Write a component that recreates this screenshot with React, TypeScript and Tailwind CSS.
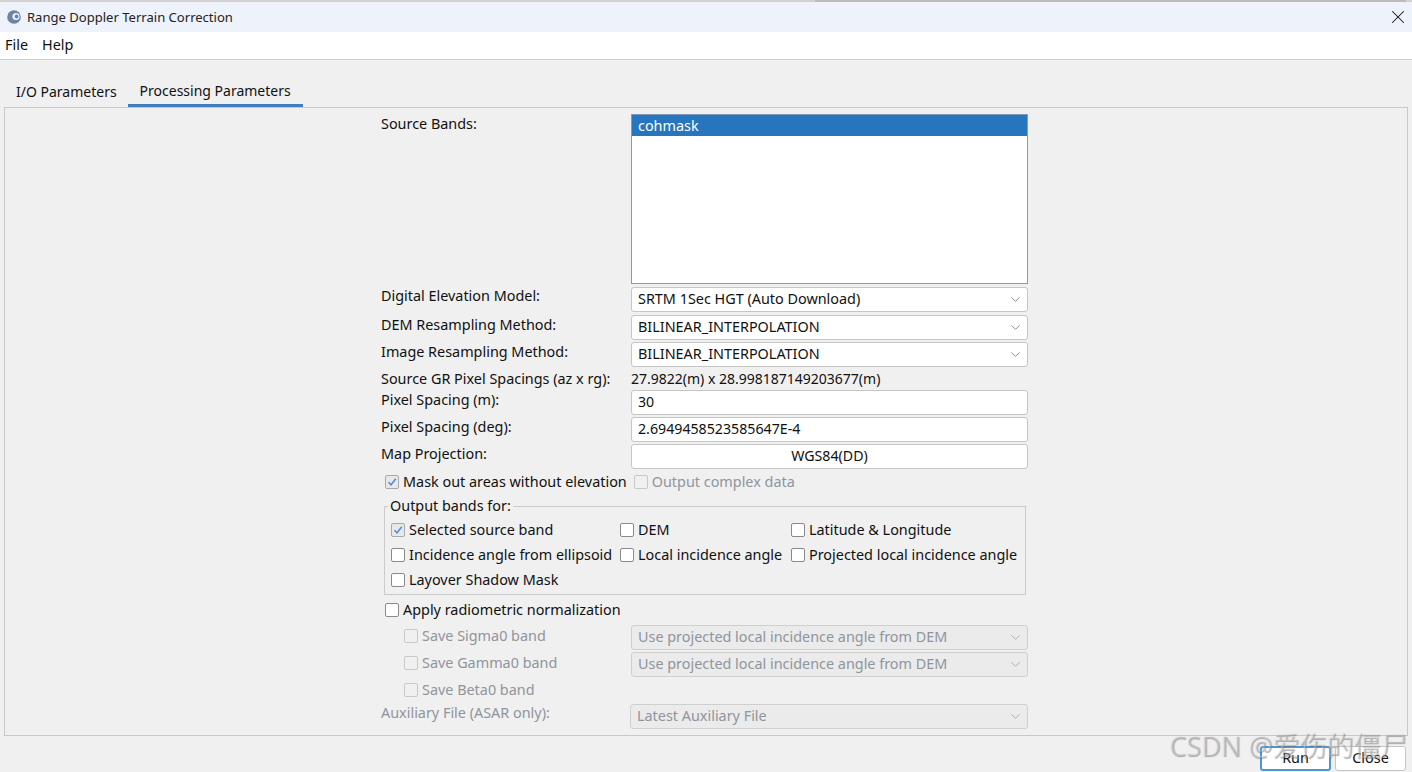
import React from "react";
import { ChevronDown, X } from "lucide-react";

const Check = ({ checked, muted }: { checked?: boolean; muted?: boolean }) => (
  <span
    className={`w-[14px] h-[14px] shrink-0 rounded-[2px] border flex items-center justify-center ${
      muted ? "border-[#c8c8c8] bg-[#f0f0f0]" : checked ? "border-[#a8a8a8] bg-[#e8e8e8]" : "border-[#8a8a8a] bg-white"
    }`}
  >
    {checked && (
      <svg width="12" height="12" viewBox="0 0 12 12" fill="none">
        <path d="M2.4 6.2 5 8.8 9.8 2.8" stroke="#4a8fd4" strokeWidth="1.5" />
      </svg>
    )}
  </span>
);

const Option = ({ label, checked, muted }: { label: string; checked?: boolean; muted?: boolean }) => (
  <div className={`flex items-center gap-[4px] ${muted ? "text-[#8f959c]" : "text-[#111]"}`}>
    <Check checked={checked} muted={muted} />
    <span className="whitespace-nowrap">{label}</span>
  </div>
);

const Select = ({ value, muted }: { value: string; muted?: boolean }) => (
  <div
    className={`w-[397px] h-[25px] rounded-[3px] border flex items-center justify-between pl-[6px] pr-[4px] ${
      muted ? "bg-[#ebebeb] border-[#cfcfcf] text-[#8f959c]" : "bg-white border-[#c6c6c6] text-[#111]"
    }`}
  >
    <span className="whitespace-nowrap pb-[2px]">{value}</span>
    <ChevronDown size={15} strokeWidth={1.2} className={muted ? "text-[#9a9a9a]" : "text-[#666]"} />
  </div>
);

const TextBox = ({ value, center }: { value: string; center?: boolean }) => (
  <div className={`w-[397px] h-[25px] rounded-[3px] border border-[#c6c6c6] bg-white flex items-center px-[6px] pb-[1px] text-[14.2px] text-[#111] ${center ? "justify-center" : ""}`}>
    {value}
  </div>
);

const Row = ({ label, children, className, flush }: { label: string; children: React.ReactNode; className?: string; flush?: boolean }) => (
  <div className={`flex ${className ?? ""}`}>
    <div className={`w-[250px] shrink-0 whitespace-nowrap leading-[20px] text-[#111] ${flush ? "" : "mt-[-1px]"}`}>{label}</div>
    {children}
  </div>
);

export default function App() {
  return (
    <div
      className="w-[1412px] h-[772px] overflow-hidden relative bg-[#f0f0f0] flex flex-col text-[14.4px] leading-[20px] text-[#111]"
      style={{ fontFamily: '"Noto Sans", "Noto Sans CJK SC", sans-serif' }}
    >
      {/* title bar */}
      <div className="h-[32px] shrink-0 bg-[#eef2fa] border-t-2 border-[#d2d2d2] flex items-center pl-[7px] pr-[3px] text-[13.05px] text-[#222] relative">
        <span className="absolute left-[815px] right-[6px] top-[-2px] h-[2px] bg-[#bcbcbc]" />
        <svg width="14" height="14" viewBox="0 0 14 14" className="mr-[6px]">
          <circle cx="7" cy="7" r="6.8" fill="#6b83a6" />
          <circle cx="9" cy="6.5" r="3.6" fill="#eef2fa" />
          <circle cx="9.6" cy="6.5" r="1.9" fill="#6b83a6" />
        </svg>
        <span>Range Doppler Terrain Correction</span>
        <X size={22} strokeWidth={1.1} className="ml-auto text-[#111]" />
      </div>

      {/* menu */}
      <div className="h-[28px] shrink-0 bg-white border-b border-[#cfcfcf] flex items-center gap-[14px] pl-[5px] pb-[1px]">
        <span>File</span>
        <span>Help</span>
      </div>

      {/* tabs */}
      <div className="h-[47px] shrink-0 flex items-end pl-[4px] pr-[4px] text-[14px]">
        <div className="h-[32px] pl-[12px] pr-[11px] pt-[2px] flex items-center">I/O Parameters</div>
        <div className="h-[32px] w-[175px] pt-[3px] flex items-center justify-center border-b-[3px] border-[#3f7fbf]">Processing Parameters</div>
      </div>

      {/* panel */}
      <div className="mx-[4px] h-[629px] shrink-0 border border-[#c8c8c8] flex justify-center pt-[6px]">
        <div className="w-[647px] ml-[-3px] flex flex-col">
          <Row label="Source Bands:" flush>
            <div className="w-[397px] h-[170px] border border-[#7f9db9] bg-white">
              <div className="h-[21px] bg-[#2675bf] text-white px-[6px] flex items-center">cohmask</div>
            </div>
          </Row>

          <Row label="Digital Elevation Model:" className="mt-[3px]">
            <Select value="SRTM 1Sec HGT (Auto Download)" />
          </Row>
          <Row label="DEM Resampling Method:" className="mt-[3px]" flush>
            <Select value="BILINEAR_INTERPOLATION" />
          </Row>
          <Row label="Image Resampling Method:" className="mt-[2px]" flush>
            <Select value="BILINEAR_INTERPOLATION" />
          </Row>
          <Row label="Source GR Pixel Spacings (az x rg):" className="mt-[2px]" flush>
            <div className="leading-[20px] text-[14px]">27.9822(m) x 28.998187149203677(m)</div>
          </Row>
          <Row label="Pixel Spacing (m):" className="mt-[1px]" flush>
            <TextBox value="30" />
          </Row>
          <Row label="Pixel Spacing (deg):" className="mt-[2px]" flush>
            <TextBox value="2.6949458523585647E-4" />
          </Row>
          <Row label="Map Projection:" className="mt-[2px]" flush>
            <TextBox value="WGS84(DD)" center />
          </Row>

          <div className="flex items-center gap-[7px] ml-[4px] mt-[3px] h-[20px]">
            <Option label="Mask out areas without elevation" checked />
            <Option label="Output complex data" muted />
          </div>

          {/* output bands */}
          <div className="relative ml-[3px] mr-[2px] mt-[14px] h-[89px] border border-[#cbcbcb] pl-[6px] pt-[10px]">
            <span className="absolute left-[3px] top-[-11px] bg-[#f0f0f0] px-[2px]">Output bands for:</span>
            <div className="grid grid-cols-[229px_171px_auto] grid-rows-[25px_25px_25px] items-center">
              <Option label="Selected source band" checked />
              <Option label="DEM" />
              <Option label="Latitude & Longitude" />
              <Option label="Incidence angle from ellipsoid" />
              <Option label="Local incidence angle" />
              <Option label="Projected local incidence angle" />
              <Option label="Layover Shadow Mask" />
            </div>
          </div>

          <div className="ml-[4px] mt-[5px]">
            <Option label="Apply radiometric normalization" />
          </div>

          <div className="flex flex-col mt-[5px]">
            <div className="h-[25px] flex items-center relative pl-[250px]">
              <div className="absolute left-[23px] top-[1px]"><Option label="Save Sigma0 band" muted /></div>
              <Select value="Use projected local incidence angle from DEM" muted />
            </div>
            <div className="h-[25px] flex items-center relative pl-[250px] mt-[2px]">
              <div className="absolute left-[23px] top-[1px]"><Option label="Save Gamma0 band" muted /></div>
              <Select value="Use projected local incidence angle from DEM" muted />
            </div>
            <div className="ml-[23px] mt-[3px]">
              <Option label="Save Beta0 band" muted />
            </div>
            <div className="flex mt-[3px]">
              <div className="w-[249px] text-[#8f959c] whitespace-nowrap">Auxiliary File (ASAR only):</div>
              <div className="mt-[1px] w-[398px]">
                <div className="h-[25px] rounded-[3px] border border-[#cfcfcf] bg-[#ebebeb] text-[#8f959c] flex items-center justify-between pl-[6px] pr-[4px]">
                  <span className="pb-[2px]">Latest Auxiliary File</span>
                  <ChevronDown size={15} strokeWidth={1.2} className="text-[#9a9a9a]" />
                </div>
              </div>
            </div>
          </div>
        </div>
      </div>

      {/* footer */}
      <div className="flex justify-end gap-[4px] pr-[6px] mt-[10px]">
        <div className="w-[71px] h-[25px] rounded-[3px] border-2 border-[#4a97dc] bg-white flex items-center justify-center pb-[1px]">Run</div>
        <div className="w-[71px] h-[25px] rounded-[3px] border border-[#c6c6c6] bg-white flex items-center justify-center pb-[1px]">Close</div>
      </div>

      {/* watermark */}
      <div className="absolute left-[1169px] top-[729px] text-[27px] leading-[34px] whitespace-nowrap text-[#e8e8e8]/30 [text-shadow:1px_1px_1px_rgba(110,110,110,0.55)]">
        CSDN @爱伤的僵尸
      </div>
    </div>
  );
}
